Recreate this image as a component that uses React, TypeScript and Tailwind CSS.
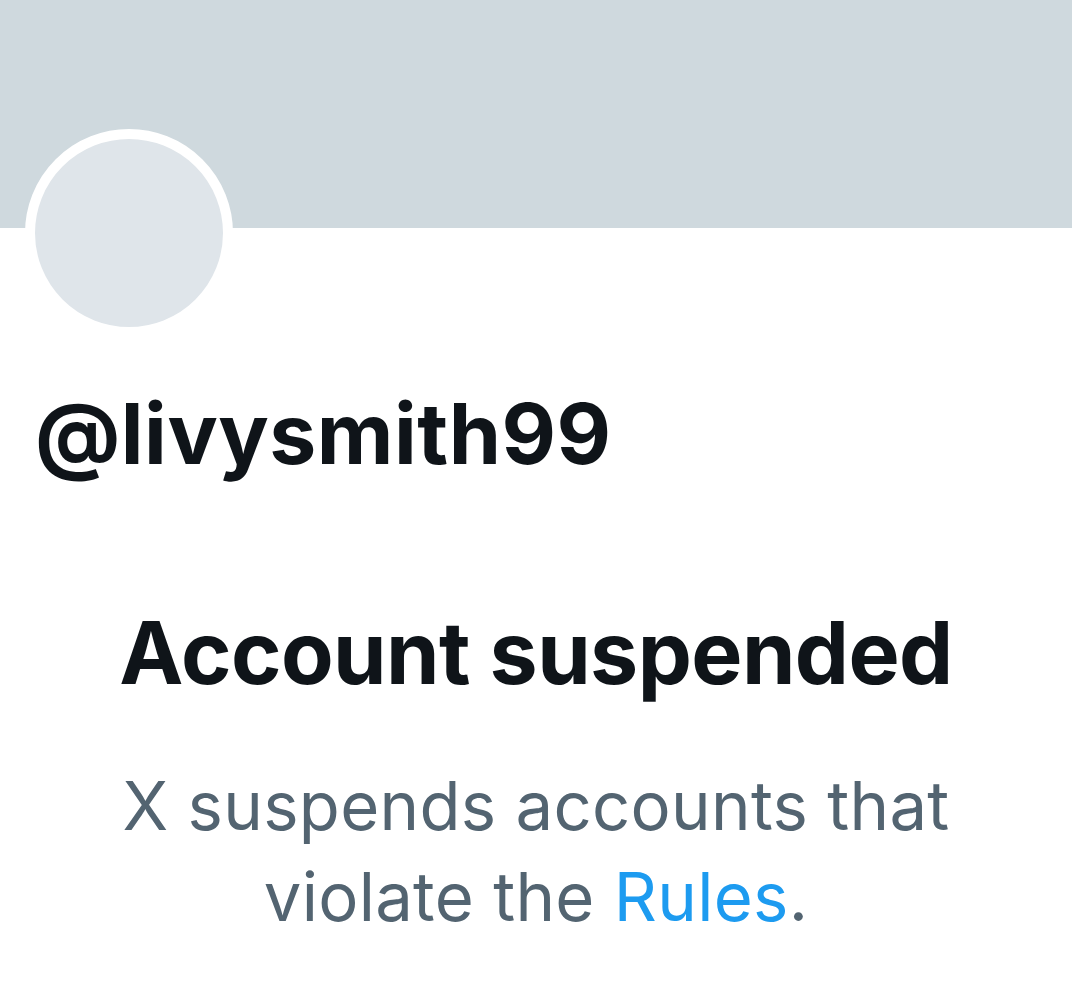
export default function App() {
  return (
    <div className="min-h-screen bg-white" style={{ fontFamily: 'Inter, "Noto Sans", sans-serif' }}>
      {/* banner + avatar */}
      <div className="h-[228px] bg-[#cfd9de]"></div>
      <div className="ml-[25px] -mt-[99px] w-[208px] h-[208px] rounded-full border-[10px] border-white bg-[#dfe5ea]"></div>

      {/* handle */}
      <div className="mt-[47px] pl-[35px] text-[84px] leading-[100px] font-bold text-[#0f1419] tracking-[0.5px]">
        @livysmith99
      </div>

      {/* suspended notice */}
      <div className="mt-[119px] px-[30px] text-center">
        <h2 className="text-[86px] leading-[100px] font-bold text-[#0f1419] tracking-[-0.6px]">Account suspended</h2>
        <p className="mt-[57px] text-[67px] leading-[91px] text-[#536471] tracking-[0.3px]">
          X suspends accounts that<br />
          violate the <a href="#" className="text-[#1d9bf0]">Rules</a>.
        </p>
      </div>
    </div>
  );
}
